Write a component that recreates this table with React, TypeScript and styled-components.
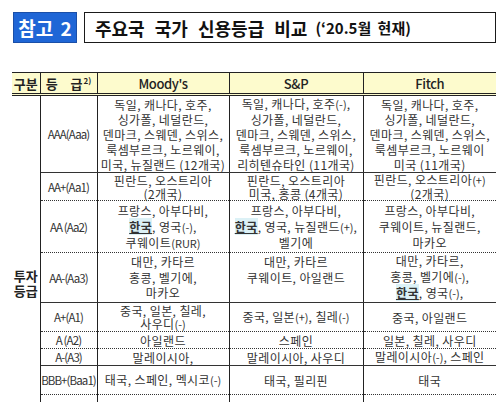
import React from "react";
import styled, { createGlobalStyle } from "styled-components";

const GlobalStyle = createGlobalStyle`
  html, body {
    margin: 0;
    padding: 0;
    overflow: hidden;
    background: #fff;
  }
  body {
    font-family: "Noto Sans CJK KR", "Noto Sans", sans-serif;
    color: #333;
  }
`;

type Sep = "solid" | "dotted";

interface RatingRow {
  grade: string;
  height: number;
  lh: number;
  sep: Sep;
  moodys: React.ReactNode[];
  sp: React.ReactNode[];
  fitch: React.ReactNode[];
}

const Page = styled.div`
  width: 503px;
  box-sizing: border-box;
  padding: 12px 7px 0 12px;
`;

const TitleBar = styled.div`
  display: flex;
  gap: 7px;
  height: 31px;
  margin-left: 1px;
`;

const Badge = styled.div`
  width: 64px;
  box-sizing: border-box;
  display: flex;
  align-items: center;
  justify-content: center;
  background: #1f66d6;
  border: 1px solid #1a4fa8;
  color: #fff;
  font-size: 19px;
  font-weight: 700;
  word-spacing: 3px;
`;

const TitleBox = styled.div`
  flex: 1;
  box-sizing: border-box;
  display: flex;
  align-items: center;
  padding-left: 10px;
  border: 1.5px solid #1a1a1a;
  color: #111;
  font-size: 18px;
  font-weight: 700;
  word-spacing: 6px;
  white-space: nowrap;
`;

const TitleNote = styled.span`
  margin-left: 8px;
  font-size: 15px;
  word-spacing: 3px;
`;

const Table = styled.table`
  margin-top: 29px;
  width: 484px;
  table-layout: fixed;
  border-collapse: collapse;
`;

const HeadCell = styled.th<{ $first?: boolean; $latin?: boolean }>`
  height: 20px;
  padding: 0;
  background: #fdfbcd;
  border-top: 1px solid #222;
  border-bottom: 3px double #222;
  border-left: ${({ $first }) => ($first ? "none" : "1px solid #222")};
  font-size: 13px;
  font-weight: ${({ $latin }) => ($latin ? 500 : 700)};
  letter-spacing: ${({ $latin }) => ($latin ? "-0.4px" : "0")};
  color: #222;
  text-align: center;
  white-space: nowrap;
`;

const Sup = styled.span`
  font-size: 8px;
  vertical-align: 5px;
  margin-left: 1px;
`;

const GroupCell = styled.td`
  padding: 172px 0 0;
  vertical-align: top;
  border-right: 1px solid #222;
  font-size: 13px;
  font-weight: 700;
  line-height: 15px;
  text-align: center;
  color: #222;
`;

const GradeCell = styled.td<{ $sep: Sep }>`
  padding: 0;
  border-left: 1px solid #222;
  border-bottom: 1px ${({ $sep }) => $sep} #333;
  font-size: 11.5px;
  letter-spacing: -0.9px;
  color: #333;
  text-align: center;
  white-space: nowrap;
  overflow: hidden;
`;

const Cell = styled.td<{ $sep: Sep; $lh: number }>`
  padding: 0;
  border-left: 1px solid #222;
  border-bottom: 1px ${({ $sep }) => $sep} #333;
  font-size: 12px;
  letter-spacing: 0.4px;
  line-height: ${({ $lh }) => $lh}px;
  text-align: center;
  white-space: nowrap;
  color: #333;
`;

const Korea = styled.span`
  font-weight: 700;
  text-decoration: underline;
  background: #dcf1f6;
`;

const Small = styled.span`
  font-size: 11px;
  letter-spacing: 0;
`;

const korea = <Korea>한국</Korea>;

const rows: RatingRow[] = [
  {
    grade: "AAA(Aaa)",
    height: 75,
    lh: 15,
    sep: "solid",
    moodys: ["독일, 캐나다, 호주,", "싱가폴, 네덜란드,", "덴마크, 스웨덴, 스위스,", "룩셈부르크, 노르웨이,", "미국, 뉴질랜드 (12개국)"],
    sp: [<>독일, 캐나다, 호주<Small>(-)</Small>,</>, "싱가폴, 네덜란드,", "덴마크, 스웨덴, 스위스,", "룩셈부르크, 노르웨이,", "리히텐슈타인 (11개국)"],
    fitch: ["독일, 캐나다, 호주,", "싱가폴, 네덜란드,", "덴마크, 스웨덴, 스위스,", "룩셈부르크, 노르웨이", "미국 (11개국)"],
  },
  {
    grade: "AA+(Aa1)",
    height: 26,
    lh: 13,
    sep: "dotted",
    moodys: ["핀란드, 오스트리아", "(2개국)"],
    sp: ["핀란드, 오스트리아", "미국, 홍콩 (4개국)"],
    fitch: [<>핀란드, 오스트리아<Small>(+)</Small></>, "(2개국)"],
  },
  {
    grade: "AA (Aa2)",
    height: 52,
    lh: 16,
    sep: "dotted",
    moodys: ["프랑스, 아부다비,", <>{korea}, 영국<Small>(-)</Small>,</>, <>쿠웨이트<Small>(RUR)</Small></>],
    sp: ["프랑스, 아부다비,", <>{korea}, 영국, 뉴질랜드<Small>(+)</Small>,</>, "벨기에"],
    fitch: ["프랑스, 아부다비,", "쿠웨이트, 뉴질랜드,", "마카오"],
  },
  {
    grade: "AA-(Aa3)",
    height: 50,
    lh: 15.5,
    sep: "solid",
    moodys: ["대만, 카타르", "홍콩, 벨기에,", "마카오"],
    sp: ["대만, 카타르", "쿠웨이트, 아일랜드", "\u00a0"],
    fitch: ["대만, 카타르,", <>홍콩, 벨기에<Small>(-)</Small>,</>, <>{korea}, 영국<Small>(-)</Small>,</>],
  },
  {
    grade: "A+(A1)",
    height: 29,
    lh: 13,
    sep: "dotted",
    moodys: ["중국, 일본, 칠레,", <>사우디<Small>(-)</Small></>],
    sp: [<>중국, 일본<Small>(+)</Small>, 칠레<Small>(-)</Small></>],
    fitch: ["중국, 아일랜드"],
  },
  {
    grade: "A (A2)",
    height: 16,
    lh: 15,
    sep: "dotted",
    moodys: ["아일랜드"],
    sp: ["스페인"],
    fitch: ["일본, 칠레, 사우디"],
  },
  {
    grade: "A-(A3)",
    height: 16,
    lh: 15,
    sep: "solid",
    moodys: ["말레이시아,"],
    sp: ["말레이시아, 사우디"],
    fitch: [<>말레이시아<Small>(-)</Small>, 스페인</>],
  },
  {
    grade: "BBB+(Baa1)",
    height: 29,
    lh: 15,
    sep: "dotted",
    moodys: [<>태국, 스페인, 멕시코<Small>(-)</Small></>],
    sp: ["태국, 필리핀"],
    fitch: ["태국"],
  },
  {
    grade: "\u00a0",
    height: 30,
    lh: 15,
    sep: "dotted",
    moodys: ["\u00a0"],
    sp: ["\u00a0"],
    fitch: ["\u00a0"],
  },
];

function Lines({ items }: { items: React.ReactNode[] }) {
  return (
    <>
      {items.map((line, i) => (
        <div key={i}>{line}</div>
      ))}
    </>
  );
}

export default function App() {
  return (
    <>
      <GlobalStyle />
      <Page>
        <TitleBar>
          <Badge>참고 2</Badge>
          <TitleBox>
            주요국 국가 신용등급 비교
            <TitleNote>(‘20.5월 현재)</TitleNote>
          </TitleBox>
        </TitleBar>

        <Table>
          <colgroup>
            <col style={{ width: 28 }} />
            <col style={{ width: 57 }} />
            <col style={{ width: 132 }} />
            <col style={{ width: 134 }} />
            <col style={{ width: 133 }} />
          </colgroup>
          <thead>
            <tr>
              <HeadCell $first>구분</HeadCell>
              <HeadCell style={{ wordSpacing: 10 }}>
                등 급<Sup>2)</Sup>
              </HeadCell>
              <HeadCell $latin>Moody's</HeadCell>
              <HeadCell $latin>S&amp;P</HeadCell>
              <HeadCell $latin>Fitch</HeadCell>
            </tr>
          </thead>
          <tbody>
            {rows.map((row, i) => (
              <tr key={i} style={{ height: row.height }}>
                {i === 0 && (
                  <GroupCell rowSpan={rows.length}>
                    투자
                    <br />
                    등급
                  </GroupCell>
                )}
                <GradeCell $sep={row.sep}>{row.grade}</GradeCell>
                <Cell $sep={row.sep} $lh={row.lh}>
                  <Lines items={row.moodys} />
                </Cell>
                <Cell $sep={row.sep} $lh={row.lh}>
                  <Lines items={row.sp} />
                </Cell>
                <Cell $sep={row.sep} $lh={row.lh}>
                  <Lines items={row.fitch} />
                </Cell>
              </tr>
            ))}
          </tbody>
        </Table>
      </Page>
    </>
  );
}
